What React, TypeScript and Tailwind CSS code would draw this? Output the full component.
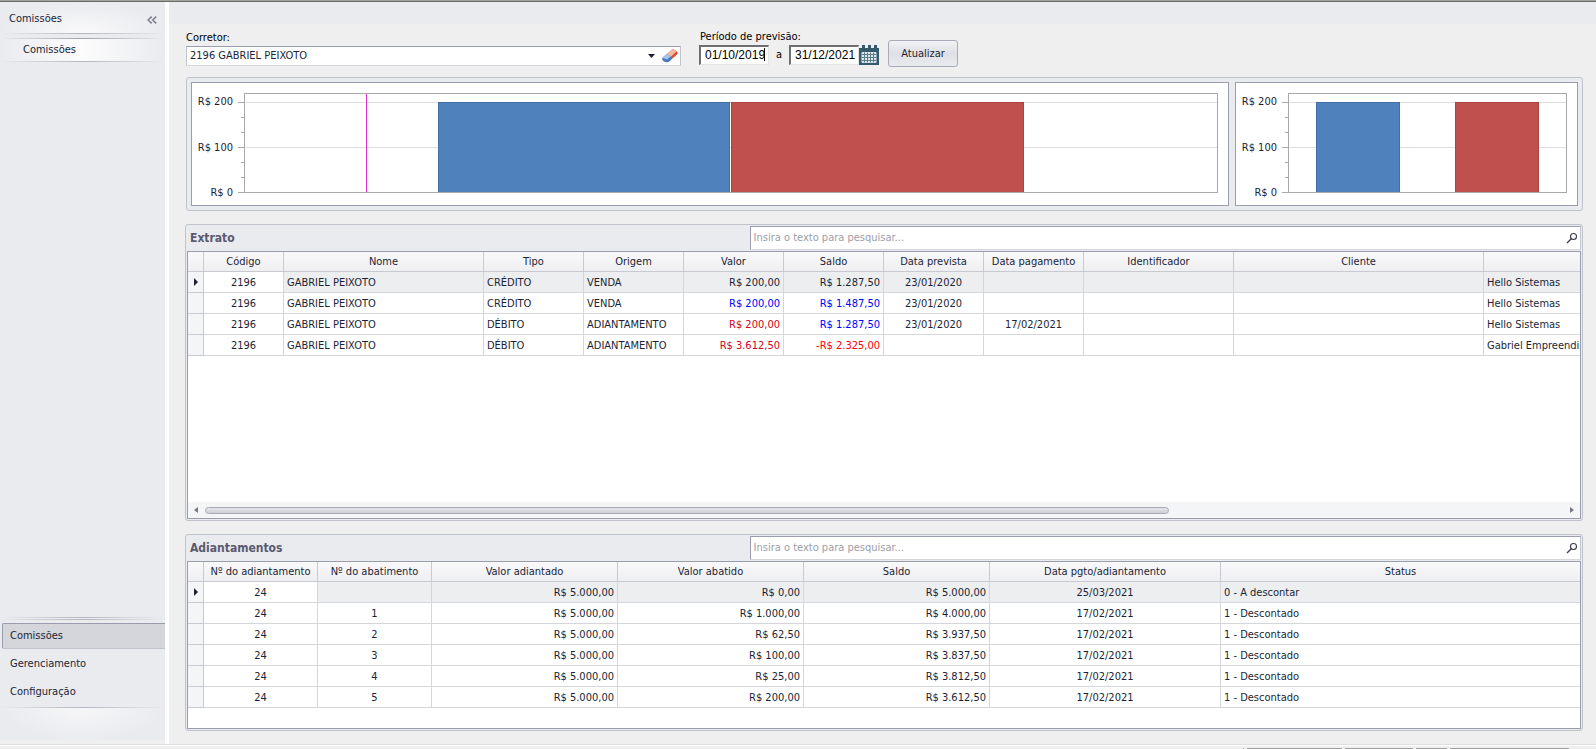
import React from "react";
import { clsx } from "clsx";

// ── Types ────────────────────────────────────────────────────

type Align = "left" | "center" | "right";

interface Column {
  title: string;
  /** Width class of the column; the last one takes what is left */
  width?: string;
  align: Align;
}

interface Cell {
  text: string;
  color?: string;
}

interface GridProps {
  label: string;
  columns: Column[];
  rows: (string | Cell)[][];
}

interface BarChartProps {
  label: string;
  bars: { x: number; width: number; fill: string; stroke: string }[];
  /** Position of the marker line, in percent of the plot */
  marker?: number;
}

// ── Data ─────────────────────────────────────────────────────

const BLUE = "text-[#0000ff]";
const CRIMSON = "text-[#d0021b]";
const RED = "text-[#ff0000]";

const extratoColumns: Column[] = [
  { title: "Código", width: "w-20", align: "center" },
  { title: "Nome", width: "w-[200px]", align: "left" },
  { title: "Tipo", width: "w-[100px]", align: "left" },
  { title: "Origem", width: "w-[100px]", align: "left" },
  { title: "Valor", width: "w-[100px]", align: "right" },
  { title: "Saldo", width: "w-[100px]", align: "right" },
  { title: "Data prevista", width: "w-[100px]", align: "center" },
  { title: "Data pagamento", width: "w-[100px]", align: "center" },
  { title: "Identificador", width: "w-[150px]", align: "left" },
  { title: "Cliente", width: "w-[250px]", align: "left" },
  { title: "", align: "left" },
];

const extratoRows: (string | Cell)[][] = [
  ["2196", "GABRIEL PEIXOTO", "CRÉDITO", "VENDA", "R$ 200,00", "R$ 1.287,50", "23/01/2020", "", "", "", "Hello Sistemas"],
  ["2196", "GABRIEL PEIXOTO", "CRÉDITO", "VENDA", { text: "R$ 200,00", color: BLUE }, { text: "R$ 1.487,50", color: BLUE }, "23/01/2020", "", "", "", "Hello Sistemas"],
  ["2196", "GABRIEL PEIXOTO", "DÉBITO", "ADIANTAMENTO", { text: "R$ 200,00", color: CRIMSON }, { text: "R$ 1.287,50", color: BLUE }, "23/01/2020", "17/02/2021", "", "", "Hello Sistemas"],
  ["2196", "GABRIEL PEIXOTO", "DÉBITO", "ADIANTAMENTO", { text: "R$ 3.612,50", color: CRIMSON }, { text: "-R$ 2.325,00", color: RED }, "", "", "", "", "Gabriel Empreendim"],
];

const adiantamentoColumns: Column[] = [
  { title: "Nº do adiantamento", width: "w-[114px]", align: "center" },
  { title: "Nº do abatimento", width: "w-[114px]", align: "center" },
  { title: "Valor adiantado", width: "w-[186px]", align: "right" },
  { title: "Valor abatido", width: "w-[186px]", align: "right" },
  { title: "Saldo", width: "w-[186px]", align: "right" },
  { title: "Data pgto/adiantamento", width: "w-[231px]", align: "center" },
  { title: "Status", align: "left" },
];

const adiantamentoRows: string[][] = [
  ["24", "", "R$ 5.000,00", "R$ 0,00", "R$ 5.000,00", "25/03/2021", "0 - A descontar"],
  ["24", "1", "R$ 5.000,00", "R$ 1.000,00", "R$ 4.000,00", "17/02/2021", "1 - Descontado"],
  ["24", "2", "R$ 5.000,00", "R$ 62,50", "R$ 3.937,50", "17/02/2021", "1 - Descontado"],
  ["24", "3", "R$ 5.000,00", "R$ 100,00", "R$ 3.837,50", "17/02/2021", "1 - Descontado"],
  ["24", "4", "R$ 5.000,00", "R$ 25,00", "R$ 3.812,50", "17/02/2021", "1 - Descontado"],
  ["24", "5", "R$ 5.000,00", "R$ 200,00", "R$ 3.612,50", "17/02/2021", "1 - Descontado"],
];

const blueBar = { fill: "#4f81bd", stroke: "#416fa6" };
const redBar = { fill: "#c0504d", stroke: "#a84441" };

// ── Icons ────────────────────────────────────────────────────

function CollapseIcon() {
  return (
    <svg width="10" height="8" viewBox="0 0 10 8" fill="none" stroke="#7f7f92" strokeWidth="1.6">
      <path d="M4.700 .6 1.200 4l3.500 3.400M9.200 .6 5.700 4l3.500 3.400" />
    </svg>
  );
}

function EraserIcon() {
  return (
    <svg width="16" height="14" viewBox="0 0 16 14">
      <path d="M.5 9 9.500 1Q10.500 0 12 .5L14.500 2Q16 3 15.500 5L7 12.500Q5.500 13.500 4 13L1.500 12Q0 11 .5 9Z" fill="#d9492f" />
      <path d="M.5 8.500 9.500 1Q10.500 0 12 .5L14.800 2.200 7.500 9 3 7Z" fill="#f4b8a0" />
      <path d="M.5 9 4.500 5.300 8.500 7.500 9.300 10.500 7 12.500Q5.500 13.500 4 13L1.500 12Q0 11 .5 9Z" fill="#3f7fca" />
      <path d="M.7 8.800 4.500 5.300 8.500 7.500 5 10.500Z" fill="#a3c8ef" />
    </svg>
  );
}

function CalendarIcon() {
  return (
    <svg width="20" height="20" viewBox="0 0 20 20">
      <path d="M0 3h3V0h3v3h3V0h3v3h3V0h3v3h2v17H0Z" fill="#35596d" />
      <rect x="2.500" y="7" width="15" height="11" rx="1" fill="#dde6ea" />
      <path d="M3 9.500h14M3 12.500h14M3 15.500h14M5.500 7.500v10M8.500 7.500v10M11.500 7.500v10M14.500 7.500v10" stroke="#5d7c8c" />
    </svg>
  );
}

function SearchIcon() {
  return (
    <svg width="12" height="12" viewBox="0 0 12 12" fill="none" stroke="#3b3a4e">
      <circle cx="7.500" cy="4.500" r="3" strokeWidth="1.100" />
      <path d="M5.300 6.700 1 11" strokeWidth="1.300" />
    </svg>
  );
}

// ── Components ───────────────────────────────────────────────

function BarChart({ label, bars, marker }: BarChartProps) {
  return (
    <div className="flex min-w-0 border border-[#9a9dab] bg-white pt-[10px] pr-[10px] pb-3">
      <div className="mt-px -mb-2 flex w-[41px] shrink-0 flex-col justify-between text-right leading-4">
        <span>R$ 200</span>
        <span>R$ 100</span>
        <span>R$ 0</span>
      </div>
      <svg className="ml-[5px] h-[100px] w-[6px] shrink-0" stroke="#a9a9a9" shapeRendering="crispEdges">
        <path d="M0 9.500h6M0 54.500h6M0 99.500h6M3 24.500h3M3 39.500h3M3 69.500h3M3 84.500h3" />
      </svg>
      <svg role="img" aria-label={label} className="h-[100px] min-w-0 flex-1 border border-[#a9a9a9]" shapeRendering="crispEdges">
        <path d="M0 8.500h4000M0 53.500h4000" stroke="#dedede" />
        {bars.map((bar) => (
          <rect
            key={bar.x}
            x={`${bar.x}%`}
            y="8.500"
            width={`${bar.width}%`}
            height="110"
            fill={bar.fill}
            stroke={bar.stroke}
          />
        ))}
        {marker !== undefined && (
          <rect x={`${marker}%`} y="0" width="1" height="100" fill="#e032c8" />
        )}
      </svg>
    </div>
  );
}

function SearchBox({ label }: { label: string }) {
  return (
    <label className="flex h-6 min-w-0 items-center border border-t-[#9a9dab] border-r-[#c4c6cf] border-b-[#d5d6dc] border-l-[#9a9dab] bg-white pr-0.5 pl-[3px]">
      <input
        type="text"
        aria-label={label}
        placeholder="Insira o texto para pesquisar..."
        className="min-w-0 flex-1 bg-transparent outline-none placeholder:text-[#9d9da6]"
      />
      <SearchIcon />
    </label>
  );
}

function Grid({ label, columns, rows }: GridProps) {
  return (
    <table aria-label={label} className="w-full table-fixed border-separate border-spacing-0 leading-4 whitespace-nowrap">
      <thead>
        <tr className="h-5 bg-linear-to-b from-[#f9f9fa] to-[#eeeff2]">
          <th className="w-4 border-r border-b border-[#c8c9d1]" />
          {columns.map((column, i) => (
            <th
              key={i}
              className={clsx(
                "border-b border-[#c8c9d1] p-0 text-center font-normal",
                column.width,
                i < columns.length - 1 && "border-r",
              )}
            >
              {column.title}
            </th>
          ))}
        </tr>
      </thead>
      <tbody>
        {rows.map((row, r) => (
          <tr key={r} className={clsx("h-[21px]", r === 0 && "bg-[#edeef0]")}>
            <td className="border-r border-b border-[#c8c9d1] bg-[#f4f5f7] p-0">
              {r === 0 && (
                <svg className="mx-auto" width="4" height="8" viewBox="0 0 4 8">
                  <path d="M0 0 4 4 0 8Z" fill="#201f35" />
                </svg>
              )}
            </td>
            {row.map((cell, i) => {
              const { text, color }: Cell = typeof cell === "string" ? { text: cell } : cell;
              const last = i === row.length - 1;
              return (
                <td
                  key={i}
                  className={clsx(
                    "overflow-hidden border-b border-[#d5d6dc] pt-px pb-0 pl-[3px]",
                    columns[i].align === "center" && "text-center",
                    columns[i].align === "right" && "text-right",
                    last ? "pr-0" : "border-r pr-[3px]",
                    i === 0 && "bg-white",
                    color,
                  )}
                >
                  {text}
                </td>
              );
            })}
          </tr>
        ))}
      </tbody>
    </table>
  );
}

interface PanelProps {
  title: string;
  className?: string;
  children: React.ReactNode;
}

function Panel({ title, className, children }: PanelProps) {
  return (
    <section className={clsx("flex flex-col rounded-[3px] border border-[#c1c3cc] bg-[#eaebef] p-px", className)}>
      <div className="grid grid-cols-[563fr_832fr] items-center pb-px">
        <h2 className="pl-[3px] text-[12px] font-bold text-[#5a5a70]">{title}</h2>
        <SearchBox label={`Pesquisar em ${title}`} />
      </div>
      <div className="flex flex-1 flex-col overflow-hidden border border-[#9a9dab] bg-white">{children}</div>
    </section>
  );
}

function HorizontalScroll() {
  return (
    <div className="mt-auto flex h-4 items-center gap-[7px] bg-[#f4f5f7] px-1.5">
      <svg width="4" height="6" viewBox="0 0 4 6">
        <path d="M4 0 0 3 4 6Z" fill="#777788" />
      </svg>
      <div className="flex-1">
        <div className="h-[7px] w-[71%] rounded-full border border-[#a8aab5] bg-linear-to-b from-[#e4e5e9] to-[#cfd0d6]" />
      </div>
      <svg width="4" height="6" viewBox="0 0 4 6">
        <path d="M0 0 4 3 0 6Z" fill="#777788" />
      </svg>
    </div>
  );
}

function Sidebar() {
  return (
    <aside className="flex w-[165px] shrink-0 flex-col bg-[#eaebef]">
      <div className="flex h-[31px] items-center justify-between bg-radial-[at_50%_100%] from-[#f9f9fa] to-[#eaebef] to-70% pt-1 pr-2 pl-[9px]">
        <span>Comissões</span>
        <button type="button" aria-label="Recolher menu">
          <CollapseIcon />
        </button>
      </div>
      <div className="h-px bg-linear-to-r from-[#eaebef] via-[#b4b5c0] to-[#eaebef]" />
      <div className="mt-1 h-px bg-linear-to-r from-[#eaebef] via-[#a2a3b0] to-[#eaebef]" />
      <a href="#comissoes" className="flex h-[22px] items-center bg-linear-to-r from-[#eaebef] via-[#fcfcfd] to-[#eaebef] pt-px pl-[23px]">
        Comissões
      </a>
      <div className="h-px bg-linear-to-r from-[#eaebef] via-[#b4b5c0] to-[#eaebef]" />
      <div className="mt-auto h-px bg-linear-to-r from-[#eaebef] via-[#b4b5c0] to-[#eaebef]" />
      <div className="mt-px h-px bg-linear-to-r from-[#eaebef] via-[#b4b5c0] to-[#eaebef]" />
      <nav className="mt-[3px] ml-0.5 flex flex-col">
        <a href="#comissoes" className="flex h-[26px] items-center rounded-l-xs border border-r-0 border-[#9a9dab] border-b-[#c1c3cc] bg-[#d5d6db] pl-[7px]">
          Comissões
        </a>
        <a href="#gerenciamento" className="flex h-7 items-center pt-0.5 pl-2">Gerenciamento</a>
        <a href="#configuracao" className="flex h-7 items-center pt-0.5 pl-2">Configuração</a>
      </nav>
      <div className="mt-0.5 h-px bg-linear-to-r from-[#eaebef] via-[#b4b5c0] to-[#eaebef]" />
      <div className="h-8 bg-radial-[at_50%_0%] from-[#f6f6f8] to-[#eaebef] to-70%" />
      <div className="h-1 bg-[#efefef]" />
    </aside>
  );
}

const dateInput =
  "h-5 w-[70px] border-t-2 border-l-2 border-r border-b border-t-[#6f6f6f] border-l-[#6f6f6f] border-r-[#e3e3e3] border-b-[#e3e3e3] bg-white pb-px pl-1 font-['Liberation_Sans',Arial,sans-serif] text-[12px] text-black outline-none";

function Filters() {
  return (
    <form className="flex items-end text-black">
      <div className="flex w-[495px] flex-col">
        <label htmlFor="corretor" className="pt-px leading-[17px]">Corretor:</label>
        <div className="flex h-5 items-center border border-t-[#9a9dab] border-r-[#c1c3cc] border-b-[#d5d6dc] border-l-[#c1c3cc] bg-white pr-[2px]">
          <select id="corretor" className="h-full min-w-0 flex-1 appearance-none pt-px pl-[3px] text-[#201f35] outline-none">
            <option>2196 GABRIEL PEIXOTO</option>
          </select>
          <svg width="7" height="4" viewBox="0 0 7 4" className="mr-[7px] shrink-0">
            <path d="M0 0h7L3.500 4Z" fill="#201f35" />
          </svg>
          <button type="button" aria-label="Limpar corretor">
            <EraserIcon />
          </button>
        </div>
      </div>
      <div className="mb-px ml-[18px] flex flex-col">
        <label htmlFor="inicio" className="pl-px leading-[17px]">Período de previsão:</label>
        <div className="flex items-center">
          <div className="relative flex">
            <input id="inicio" type="text" defaultValue="01/10/2019" className={dateInput} />
            <span className="absolute top-[3px] right-[4px] h-[13px] w-px bg-black" />
          </div>
          <label htmlFor="fim" className="w-5 text-center">a</label>
          <input id="fim" type="text" defaultValue="31/12/2021" className={dateInput} />
          <button type="button" aria-label="Abrir calendário">
            <CalendarIcon />
          </button>
        </div>
      </div>
      <button
        type="button"
        className="mb-[-1px] ml-[9px] h-[27px] w-[70px] rounded-[3px] border border-[#a8aaba] bg-linear-to-b from-[#f2f2f5] via-[#dfe0e5] to-[#eaebef] pt-0.5 text-[#201f35]"
      >
        Atualizar
      </button>
    </form>
  );
}

function StatusBar() {
  return (
    <footer className="flex h-[5px] shrink-0 flex-col justify-between border-t border-[#dfdfdf] bg-[#efefef]">
      <div className="h-px bg-white" />
      <div className="flex h-px justify-end gap-[3px] pr-[27px]">
        <div className="w-px bg-[#a0a0a0]" />
        <div className="w-[95px] bg-[#a0a0a0]" />
        <div className="w-[68px] bg-[#a0a0a0]" />
        <div className="w-[31px] bg-[#a0a0a0]" />
        <div className="w-[119px] bg-[#a0a0a0]" />
      </div>
    </footer>
  );
}

export default function App() {
  return (
    <div className="flex min-h-screen flex-col bg-[#efefef] font-['DejaVu_Sans_Condensed','DejaVu_Sans',sans-serif] text-[11px] text-[#201f35]">
      <div className="h-0.5 border-b border-[#6a6a66] bg-[#a3a3a0]" />
      <div className="flex flex-1">
        <Sidebar />
        <div className="w-1 shrink-0 bg-white" />
        <main className="flex min-w-0 flex-1 flex-col">
          <div className="h-[22px] bg-[#eaebef]" />
          <div className="flex flex-1 flex-col pt-1 pr-[13px] pb-[13px] pl-4">
            <div className="pl-px">
              <Filters />
              <div className="mt-[11px] grid grid-cols-[1038fr_343fr] gap-1.5 rounded-[3px] border border-[#c1c3cc] bg-[#eaebef] p-1">
                <BarChart
                  label="Previsão por período"
                  bars={[
                    { x: 19.9, width: 29.9, ...blueBar },
                    { x: 50, width: 30.1, ...redBar },
                  ]}
                  marker={12.4}
                />
                <BarChart
                  label="Totais"
                  bars={[
                    { x: 10, width: 30, ...blueBar },
                    { x: 60, width: 30, ...redBar },
                  ]}
                />
              </div>
            </div>
            <Panel title="Extrato" className="mt-[13px] flex-1">
              <Grid label="Extrato" columns={extratoColumns} rows={extratoRows} />
              <HorizontalScroll />
            </Panel>
            <Panel title="Adiantamentos" className="mt-[13px] h-[197px]">
              <Grid label="Adiantamentos" columns={adiantamentoColumns} rows={adiantamentoRows} />
            </Panel>
          </div>
        </main>
      </div>
      <StatusBar />
    </div>
  );
}
